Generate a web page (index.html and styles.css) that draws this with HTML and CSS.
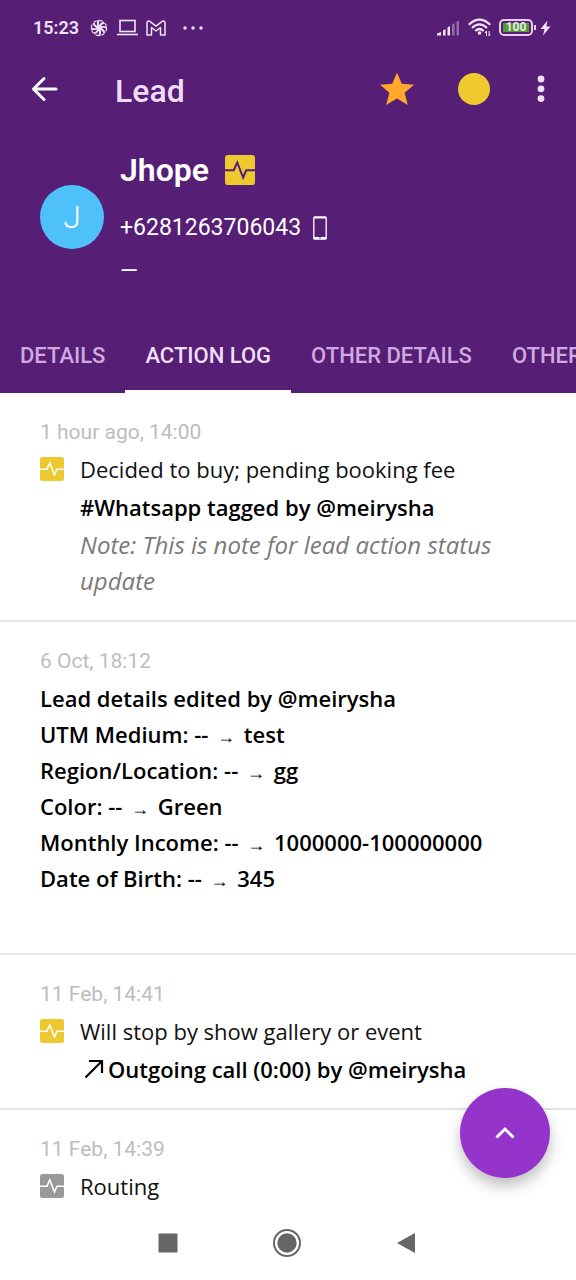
FILE: index.html
```html
<!DOCTYPE html>
<html lang="en">
<head>
<meta charset="utf-8">
<meta name="viewport" content="width=device-width, initial-scale=1">
<title>Lead</title>
<link rel="stylesheet" href="styles.css">
</head>
<body>
<svg class="sprite" aria-hidden="true">
  <symbol id="pulse" viewBox="0 0 24 24">
    <rect width="24" height="24" rx="2.500" fill="currentColor"/>
    <path class="pulse-line" d="M0 12.200H7L9.800 6L14.500 18L17 12.200H24" fill="none"/>
  </symbol>
</svg>
<div class="screen">
  <header class="header">
    <div class="status">
      <span class="clock">15:23</span>
      <svg class="st-pin" width="18" height="18" viewBox="0 0 18 18" fill="none" stroke="currentColor">
        <circle cx="9" cy="9" r="7.600" stroke-width="1.200" stroke-dasharray="3.400 2.570"/>
        <path d="M9 9Q7 5 8.500 1M9 9Q10.500 4.500 14 3.500M9 9Q13 7 17 8.500M9 9Q13.500 10.500 14.500 14M9 9Q11 13 9.500 17M9 9Q7.500 13.500 4 14.500M9 9Q5 11 1 9.500M9 9Q4.500 7.500 3.500 4" stroke-width="1.900"/>
      </svg>
      <svg class="st-laptop" width="21" height="17" viewBox="0 0 21 17" fill="none" stroke="currentColor" stroke-width="1.600">
        <rect x="3" y="1.500" width="15" height="11"/><path d="M0 15.500H21"/>
      </svg>
      <svg class="st-mail" width="20" height="16" viewBox="0 0 20 16" fill="none" stroke="currentColor" stroke-width="1.500" stroke-linejoin="round">
        <path d="M1 2.500Q1.500 .5 3.500 1.200L10 6.200L16.500 1.200Q18.500 .5 19 2.500V15H14.500V7.500L10 11L5.500 7.500V15H1Z"/>
      </svg>
      <svg class="st-more" width="21" height="4" viewBox="0 0 21 4" fill="currentColor">
        <circle cx="2" cy="2" r="1.700"/><circle cx="10" cy="2" r="1.700"/><circle cx="18" cy="2" r="1.700"/>
      </svg>
      <svg class="st-signal" width="23" height="16" viewBox="0 0 23 16" fill="currentColor">
        <path d="M0 15.500V13.500L4 12V15.500ZM6 10.500L8.500 9V15.500H6ZM10.500 7.500L13 6V15.500H10.500Z"/>
        <path d="M15 4.500L17.500 3V15.500H15ZM19.500 2L22 .5V15.500H19.500Z" opacity=".4"/>
      </svg>
      <svg class="st-wifi" width="23" height="19" viewBox="0 0 23 19" fill="none" stroke="currentColor" stroke-width="2.200">
        <path d="M.8 6.800Q11.500-3.400 22.200 6.800M4 10Q11.500 2.800 19 10M7.300 13Q11.500 9 15.700 13"/>
        <circle cx="11.500" cy="15" r="1.800" fill="currentColor" stroke="none"/>
        <path d="M18.500 13V18M17 15L18.500 13M21 13V18M22.300 16L21 18" stroke-width="1"/>
      </svg>
      <span class="battery"><span class="charge">100</span></span>
      <svg class="st-bolt" width="11" height="16" viewBox="0 0 11 16" fill="currentColor"><path d="M7.500 .5L.5 9H4.500L3 15.500L10.500 6.500H6.300Z"/></svg>
    </div>
    <div class="toolbar">
      <button class="tool back" aria-label="Back">
        <svg width="28" height="26" viewBox="0 0 28 26" fill="none" stroke="currentColor" stroke-width="3" stroke-linecap="round" stroke-linejoin="round"><path d="M25 13H2.500M13 2.500L2.500 13L13 23.500"/></svg>
      </button>
      <h1 class="title">Lead</h1>
      <button class="tool star" aria-label="Favourite">
        <svg width="34" height="34" viewBox="0 0 34 34" fill="currentColor"><path d="M17 .5L21.700 11.800L34 12.800L24.600 20.800L27.800 33L17 26.500L6.200 33L9.400 20.800L0 12.800L12.300 11.800Z"/></svg>
      </button>
      <button class="tool" aria-label="Lead status"><span class="dot"></span></button>
      <button class="tool more" aria-label="More options">
        <svg width="8" height="28" viewBox="0 0 8 28" fill="currentColor"><circle cx="4" cy="4" r="3.400"/><circle cx="4" cy="13.800" r="3.400"/><circle cx="4" cy="23.600" r="3.400"/></svg>
      </button>
    </div>
    <section class="profile">
      <div class="avatar">J</div>
      <div class="person">
        <h2 class="name">Jhope <svg class="pulse on-dark" width="30" height="30"><use href="#pulse"/></svg></h2>
        <p class="phone">+6281263706043
          <svg width="14" height="24" viewBox="0 0 14 24"><rect x=".8" y=".8" width="12.400" height="22.400" rx="1" fill="none" stroke="currentColor" stroke-width="1.300"/><path d="M1 1H13V2.500H1ZM1 21H13V23H1Z" fill="currentColor"/><circle cx="7" cy="22" r=".8" fill="#561e74"/></svg>
        </p>
        <p class="extra">—</p>
      </div>
    </section>
    <div class="tabs" role="tablist">
      <button class="tab" role="tab">DETAILS</button>
      <button class="tab selected" role="tab" aria-selected="true">ACTION LOG</button>
      <button class="tab" role="tab">OTHER DETAILS</button>
      <button class="tab" role="tab">OTHER</button>
    </div>
  </header>

  <main class="log">
    <article class="entry">
      <time class="when">1 hour ago, 14:00</time>
      <div class="action">
        <svg class="pulse" width="24" height="24"><use href="#pulse"/></svg>
        <div class="lines">
          <p>Decided to buy; pending booking fee</p>
          <p class="strong">#Whatsapp tagged by @meirysha</p>
          <p class="note">Note: This is note for lead action status update</p>
        </div>
      </div>
    </article>
    <article class="entry">
      <time class="when">6 Oct, 18:12</time>
      <p class="strong changes">Lead details edited by @meirysha<br>UTM Medium: -- <span class="to">→</span> test<br>Region/Location: -- <span class="to">→</span> gg<br>Color: -- <span class="to">→</span> Green<br>Monthly Income: -- <span class="to">→</span> 1000000-100000000<br>Date of Birth: -- <span class="to">→</span> 345<br><br></p>
    </article>
    <article class="entry">
      <time class="when">11 Feb, 14:41</time>
      <div class="action">
        <svg class="pulse" width="24" height="24"><use href="#pulse"/></svg>
        <div class="lines">
          <p>Will stop by show gallery or event</p>
          <p class="strong call"><svg width="20" height="20" viewBox="0 0 20 20" fill="none" stroke="currentColor" stroke-width="2.200"><path d="M1.500 18.500L18 2M5 2H18V14"/></svg>Outgoing call (0:00) by @meirysha</p>
        </div>
      </div>
    </article>
    <article class="entry">
      <time class="when">11 Feb, 14:39</time>
      <div class="action">
        <svg class="pulse muted" width="24" height="24"><use href="#pulse"/></svg>
        <div class="lines"><p>Routing</p></div>
      </div>
    </article>
  </main>

  <button class="fab" aria-label="Show actions">
    <svg width="20" height="14" viewBox="0 0 20 14" fill="none" stroke="currentColor" stroke-width="3"><path d="M1.500 11.500L10 3L18.500 11.500"/></svg>
  </button>

  <nav class="navbar">
    <button aria-label="Recent apps"><svg width="20" height="20" viewBox="0 0 20 20" fill="currentColor"><rect x=".5" y=".5" width="19" height="19" rx="1"/></svg></button>
    <button aria-label="Home"><svg width="28" height="28" viewBox="0 0 28 28"><circle cx="14" cy="14" r="13" fill="none" stroke="currentColor" stroke-width="2"/><circle cx="14" cy="14" r="9.700" fill="currentColor"/></svg></button>
    <button aria-label="Back"><svg width="20" height="22" viewBox="0 0 20 22" fill="currentColor"><path d="M19 1V21L1 11Z"/></svg></button>
  </nav>
</div>
</body>
</html>
```
FILE: styles.css
```css
* { box-sizing: border-box; }
body, h1, h2, p { margin: 0; }
body {
  background: #fff;
  color: #111;
  font: 22px/36px "Open Sans", "Noto Sans", sans-serif;
}
button {
  padding: 0;
  border: 0;
  background: none;
  color: inherit;
  font: inherit;
}
svg { display: block; flex: none; }
.sprite { display: none; }
.screen {
  position: relative;
  display: flex;
  flex-direction: column;
  min-height: 100vh;
}

/* Header */
.header {
  background: #561e74;
  color: #fff;
  font-family: Roboto, sans-serif;
}
.status {
  display: flex;
  align-items: center;
  height: 55px;
  padding: 0 25px 0 33px;
  color: #f1e3f8;
}
.clock { font-size: 18px; font-weight: 600; }
.st-pin { margin-left: 11px; }
.st-laptop { margin-left: 9px; }
.st-mail { margin-left: 8px; }
.st-more { margin-left: 17px; }
.st-signal { margin-left: auto; }
.st-wifi { margin-left: 8px; }
.battery {
  position: relative;
  width: 34px;
  height: 17px;
  margin-left: 8px;
  padding: 2px;
  border: 2px solid #e9cdf5;
  border-radius: 5px;
}
.battery::after {
  content: "";
  position: absolute;
  right: -5px;
  top: 4px;
  width: 2px;
  height: 5px;
  background: #e9cdf5;
}
.charge {
  display: block;
  background: #4f9d2c;
  font-size: 12px;
  font-weight: 700;
  line-height: 9px;
  text-align: center;
}
.st-bolt { margin-left: 7px; }

.toolbar {
  display: flex;
  align-items: center;
  height: 68px;
  padding: 0 31px;
}
.tool { display: flex; }
.title {
  flex: 1;
  margin-left: 56px;
  padding-top: 3px;
  color: #efdcf7;
  font-size: 32px;
  font-weight: 500;
}
.star { margin-right: 44px; color: #ffa82b; }
.dot {
  width: 32px;
  height: 32px;
  border-radius: 50%;
  background: #efca2f;
}
.more { margin-left: 47px; color: #f1e3f8; }

.profile {
  display: flex;
  align-items: flex-start;
  gap: 16px;
  padding: 23px 40px 24px;
}
.avatar {
  width: 64px;
  height: 64px;
  margin-top: 39px;
  border-radius: 50%;
  background: #4fc1fa;
  font-size: 32px;
  font-weight: 300;
  line-height: 64px;
  text-align: center;
}
.name, .phone {
  display: flex;
  align-items: center;
  gap: 12px;
}
.name {
  gap: 16px;
  margin-bottom: 13px;
  font-size: 32px;
  font-weight: 600;
  line-height: 48px;
}
.phone { font-size: 23px; line-height: 42px; }
.extra { font-size: 23px; line-height: 45px; }

.tabs { display: flex; overflow: hidden; }
.tab {
  flex: none;
  height: 75px;
  padding: 3px 20px 0;
  border-bottom: 3px solid transparent;
  color: #cfa9df;
  font-size: 22px;
  font-weight: 500;
}
.selected { border-color: #fff; color: #f1dff9; }

/* Action log */
.log { flex: 1; }
.entry {
  padding: 21px 60px 21px 40px;
  border-bottom: 2px solid #e4e4e4;
}
.entry:last-child { padding-bottom: 0; border: 0; }
.when {
  display: block;
  margin-bottom: 1px;
  color: #bdbdbd;
  font-family: Roboto, sans-serif;
  font-size: 21px;
}
.action { display: flex; gap: 16px; }
.lines { display: grid; gap: 2px; }
.pulse {
  margin-top: 6px;
  color: #edc92f;
  stroke: #fff;
  stroke-width: 0;
}
.pulse-line { stroke-width: 1.6px; }
.on-dark { margin: 0; stroke: #561e74; }
.muted { color: #999; }
.strong { color: #000; font-weight: 600; }
.to {
  margin: 0 3px;
  font-size: 18px;
  font-weight: 400;
  line-height: 1;
}
.note {
  color: #7a7a7a;
  font-size: 24px;
  font-style: italic;
}
.call { display: flex; align-items: center; gap: 4px; padding-left: 4px; }

.fab {
  position: absolute;
  right: 26px;
  bottom: 102px;
  display: grid;
  place-items: center;
  width: 90px;
  height: 90px;
  border-radius: 50%;
  background: #9434cb;
  color: #fff;
  box-shadow: 0 8px 14px rgba(0, 0, 0, .25);
}

.navbar {
  display: flex;
  justify-content: center;
  align-items: center;
  gap: 95px;
  height: 75px;
  padding-right: 2px;
  color: #666;
}
```
